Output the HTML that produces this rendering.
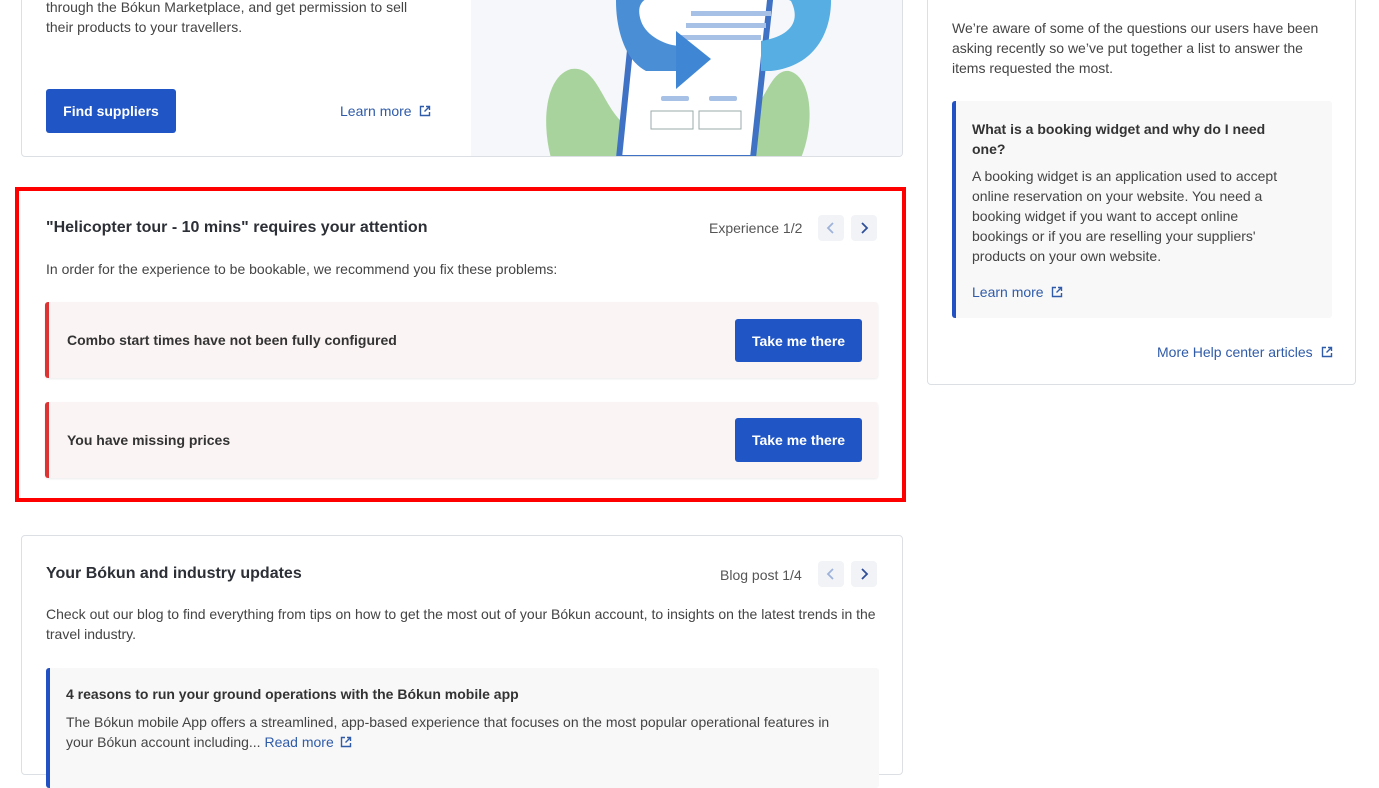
<!DOCTYPE html>
<html><head><meta charset="utf-8"><style>
*{box-sizing:border-box;margin:0;padding:0}
body{width:1379px;height:745px;overflow:hidden;background:#fff;font-family:"Liberation Sans",sans-serif;color:#333;position:relative}
.card{position:absolute;border:1px solid #dcdfe4;border-radius:4px;background:#fff}
.p{font-size:14px;line-height:20px;color:#444}
.btn{position:absolute;background:#1f55c5;color:#fff;font-weight:bold;font-size:14px;border-radius:3px;display:flex;align-items:center;justify-content:center}
.link{color:#2f5ba8;font-size:14px;position:absolute}
.h{font-weight:bold;font-size:16px;color:#2c2f36;position:absolute}
.nav{position:absolute;width:26px;height:26px;border-radius:4px;background:#f1f3f6;display:flex;align-items:center;justify-content:center}
.issue{position:absolute;left:45px;width:833px;height:76px;background:#fbf4f4;border-left:4px solid #d33;border-radius:3px;box-shadow:0 1px 2px rgba(0,0,0,.08)}
.issue span{position:absolute;left:18px;top:30px;font-size:14px;font-weight:bold;color:#333}
</style></head><body>
<svg width="0" height="0" style="position:absolute"><defs>
<symbol id="ext" viewBox="0 0 12 12"><path d="M5 1.5H1.5v9h9V7M7 1.5h3.5V5M10.5 1.5L5.5 6.5" fill="none" stroke="#2f5ba8" stroke-width="1.4"/></symbol>
</defs></svg>
<div class="card" style="left:21px;top:-20px;width:882px;height:177px;overflow:hidden">
<div class="p" style="position:absolute;left:24px;top:16px;width:375px">through the Bókun Marketplace, and get permission to sell their products to your travellers.</div>
<div class="btn" style="left:24px;top:108px;width:130px;height:44px">Find suppliers</div>
<div class="link" style="left:318px;top:122px">Learn more <svg width="12" height="12" style="margin-left:4px;vertical-align:-1px"><use href="#ext"/></svg></div>
<svg style="position:absolute;left:449px;top:0" width="433" height="177" viewBox="0 0 433 177">
<rect width="433" height="177" fill="#f5f7fb"/>
<path d="M80 177C70 140 75 95 100 88C125 84 130 120 150 140L150 177Z" fill="#a9d39c"/>
<path d="M330 177C345 140 340 95 318 90C300 88 295 120 280 130L280 177Z" fill="#a9d39c"/>
<path d="M165 10L300 10L282 177L148 177Z" fill="#fff" stroke="#3f72c4" stroke-width="6"/>
<rect x="220" y="30" width="80" height="5" fill="#a7c0e6"/><rect x="215" y="42" width="80" height="5" fill="#a7c0e6"/><rect x="210" y="54" width="80" height="5" fill="#a7c0e6"/>
<rect x="190" y="115" width="28" height="5" rx="2" fill="#a7c0e6"/><rect x="238" y="115" width="28" height="5" rx="2" fill="#a7c0e6"/>
<rect x="180" y="130" width="42" height="18" fill="none" stroke="#9aa" stroke-width="1"/><rect x="228" y="130" width="42" height="18" fill="none" stroke="#9aa" stroke-width="1"/>
<path d="M145 20C145 0 160 -10 190 -10L190 15C170 15 165 25 170 40C175 55 195 65 210 65L210 90L175 90C155 80 145 50 145 20Z" fill="#4a8fd6"/>
<path d="M205 50L240 78L205 108Z" fill="#3f86d4"/>
<path d="M360 20C360 50 345 85 300 90L290 90L290 60C320 55 330 40 320 20L300 10L360 -5Z" fill="#56aee3"/>
</svg>
</div>
<div style="position:absolute;left:15px;top:187px;width:891px;height:315px;border:4px solid #f00"></div>
<div class="h" style="left:46px;top:219px">"Helicopter tour - 10 mins" requires your attention</div>
<div style="position:absolute;left:709px;top:220px;font-size:14px;color:#555">Experience 1/2</div>
<div class="nav" style="left:818px;top:215px"><svg width="10" height="12"><path d="M7 1L2 6l5 5" fill="none" stroke="#9fb3da" stroke-width="1.8"/></svg></div>
<div class="nav" style="left:851px;top:215px"><svg width="10" height="12"><path d="M3 1l5 5-5 5" fill="none" stroke="#2f4f9a" stroke-width="1.8"/></svg></div>
<div class="p" style="position:absolute;left:46px;top:259px">In order for the experience to be bookable, we recommend you fix these problems:</div>
<div class="issue" style="top:302px"><span>Combo start times have not been fully configured</span></div>
<div class="btn" style="left:735px;top:319px;width:127px;height:43px">Take me there</div>
<div class="issue" style="top:402px"><span>You have missing prices</span></div>
<div class="btn" style="left:735px;top:418px;width:127px;height:44px">Take me there</div>
<div class="card" style="left:21px;top:535px;width:882px;height:240px">
<div class="h" style="left:24px;top:29px">Your Bókun and industry updates</div>
<div style="position:absolute;left:698px;top:31px;font-size:14px;color:#555">Blog post 1/4</div>
<div class="nav" style="left:796px;top:25px"><svg width="10" height="12"><path d="M7 1L2 6l5 5" fill="none" stroke="#9fb3da" stroke-width="1.8"/></svg></div>
<div class="nav" style="left:829px;top:25px"><svg width="10" height="12"><path d="M3 1l5 5-5 5" fill="none" stroke="#2f4f9a" stroke-width="1.8"/></svg></div>
<div class="p" style="position:absolute;left:24px;top:68px;width:840px">Check out our blog to find everything from tips on how to get the most out of your Bókun account, to insights on the latest trends in the travel industry.</div>
<div style="position:absolute;left:24px;top:132px;width:833px;height:120px;background:#f8f8f9;border-left:4px solid #2251c3;border-radius:3px">
<div style="position:absolute;left:16px;top:18px;font-weight:bold;font-size:14px">4 reasons to run your ground operations with the Bókun mobile app</div>
<div class="p" style="position:absolute;left:16px;top:44px;width:780px">The Bókun mobile App offers a streamlined, app-based experience that focuses on the most popular operational features in your Bókun account including... <span style="color:#2f5ba8">Read more <svg width="12" height="12" style="margin-left:2px;vertical-align:-1px"><use href="#ext"/></svg></span></div>
</div></div>
<div class="card" style="left:927px;top:-20px;width:429px;height:405px">
<div class="p" style="position:absolute;left:24px;top:37px;width:380px">We’re aware of some of the questions our users have been asking recently so we’ve put together a list to answer the items requested the most.</div>
<div style="position:absolute;left:24px;top:120px;width:380px;height:217px;background:#f8f8f9;border-left:4px solid #2251c3;border-radius:3px">
<div style="position:absolute;left:16px;top:18px;width:320px;font-weight:bold;font-size:14px;line-height:20px">What is a booking widget and why do I need one?</div>
<div class="p" style="position:absolute;left:16px;top:65px;width:320px">A booking widget is an application used to accept online reservation on your website. You need a booking widget if you want to accept online bookings or if you are reselling your suppliers' products on your own website.</div>
<div class="link" style="left:16px;top:183px">Learn more <svg width="12" height="12" style="margin-left:4px;vertical-align:-1px"><use href="#ext"/></svg></div>
</div>
<div class="link" style="left:229px;top:363px">More Help center articles <svg width="12" height="12" style="margin-left:4px;vertical-align:-1px"><use href="#ext"/></svg></div>
</div>
</body></html>
